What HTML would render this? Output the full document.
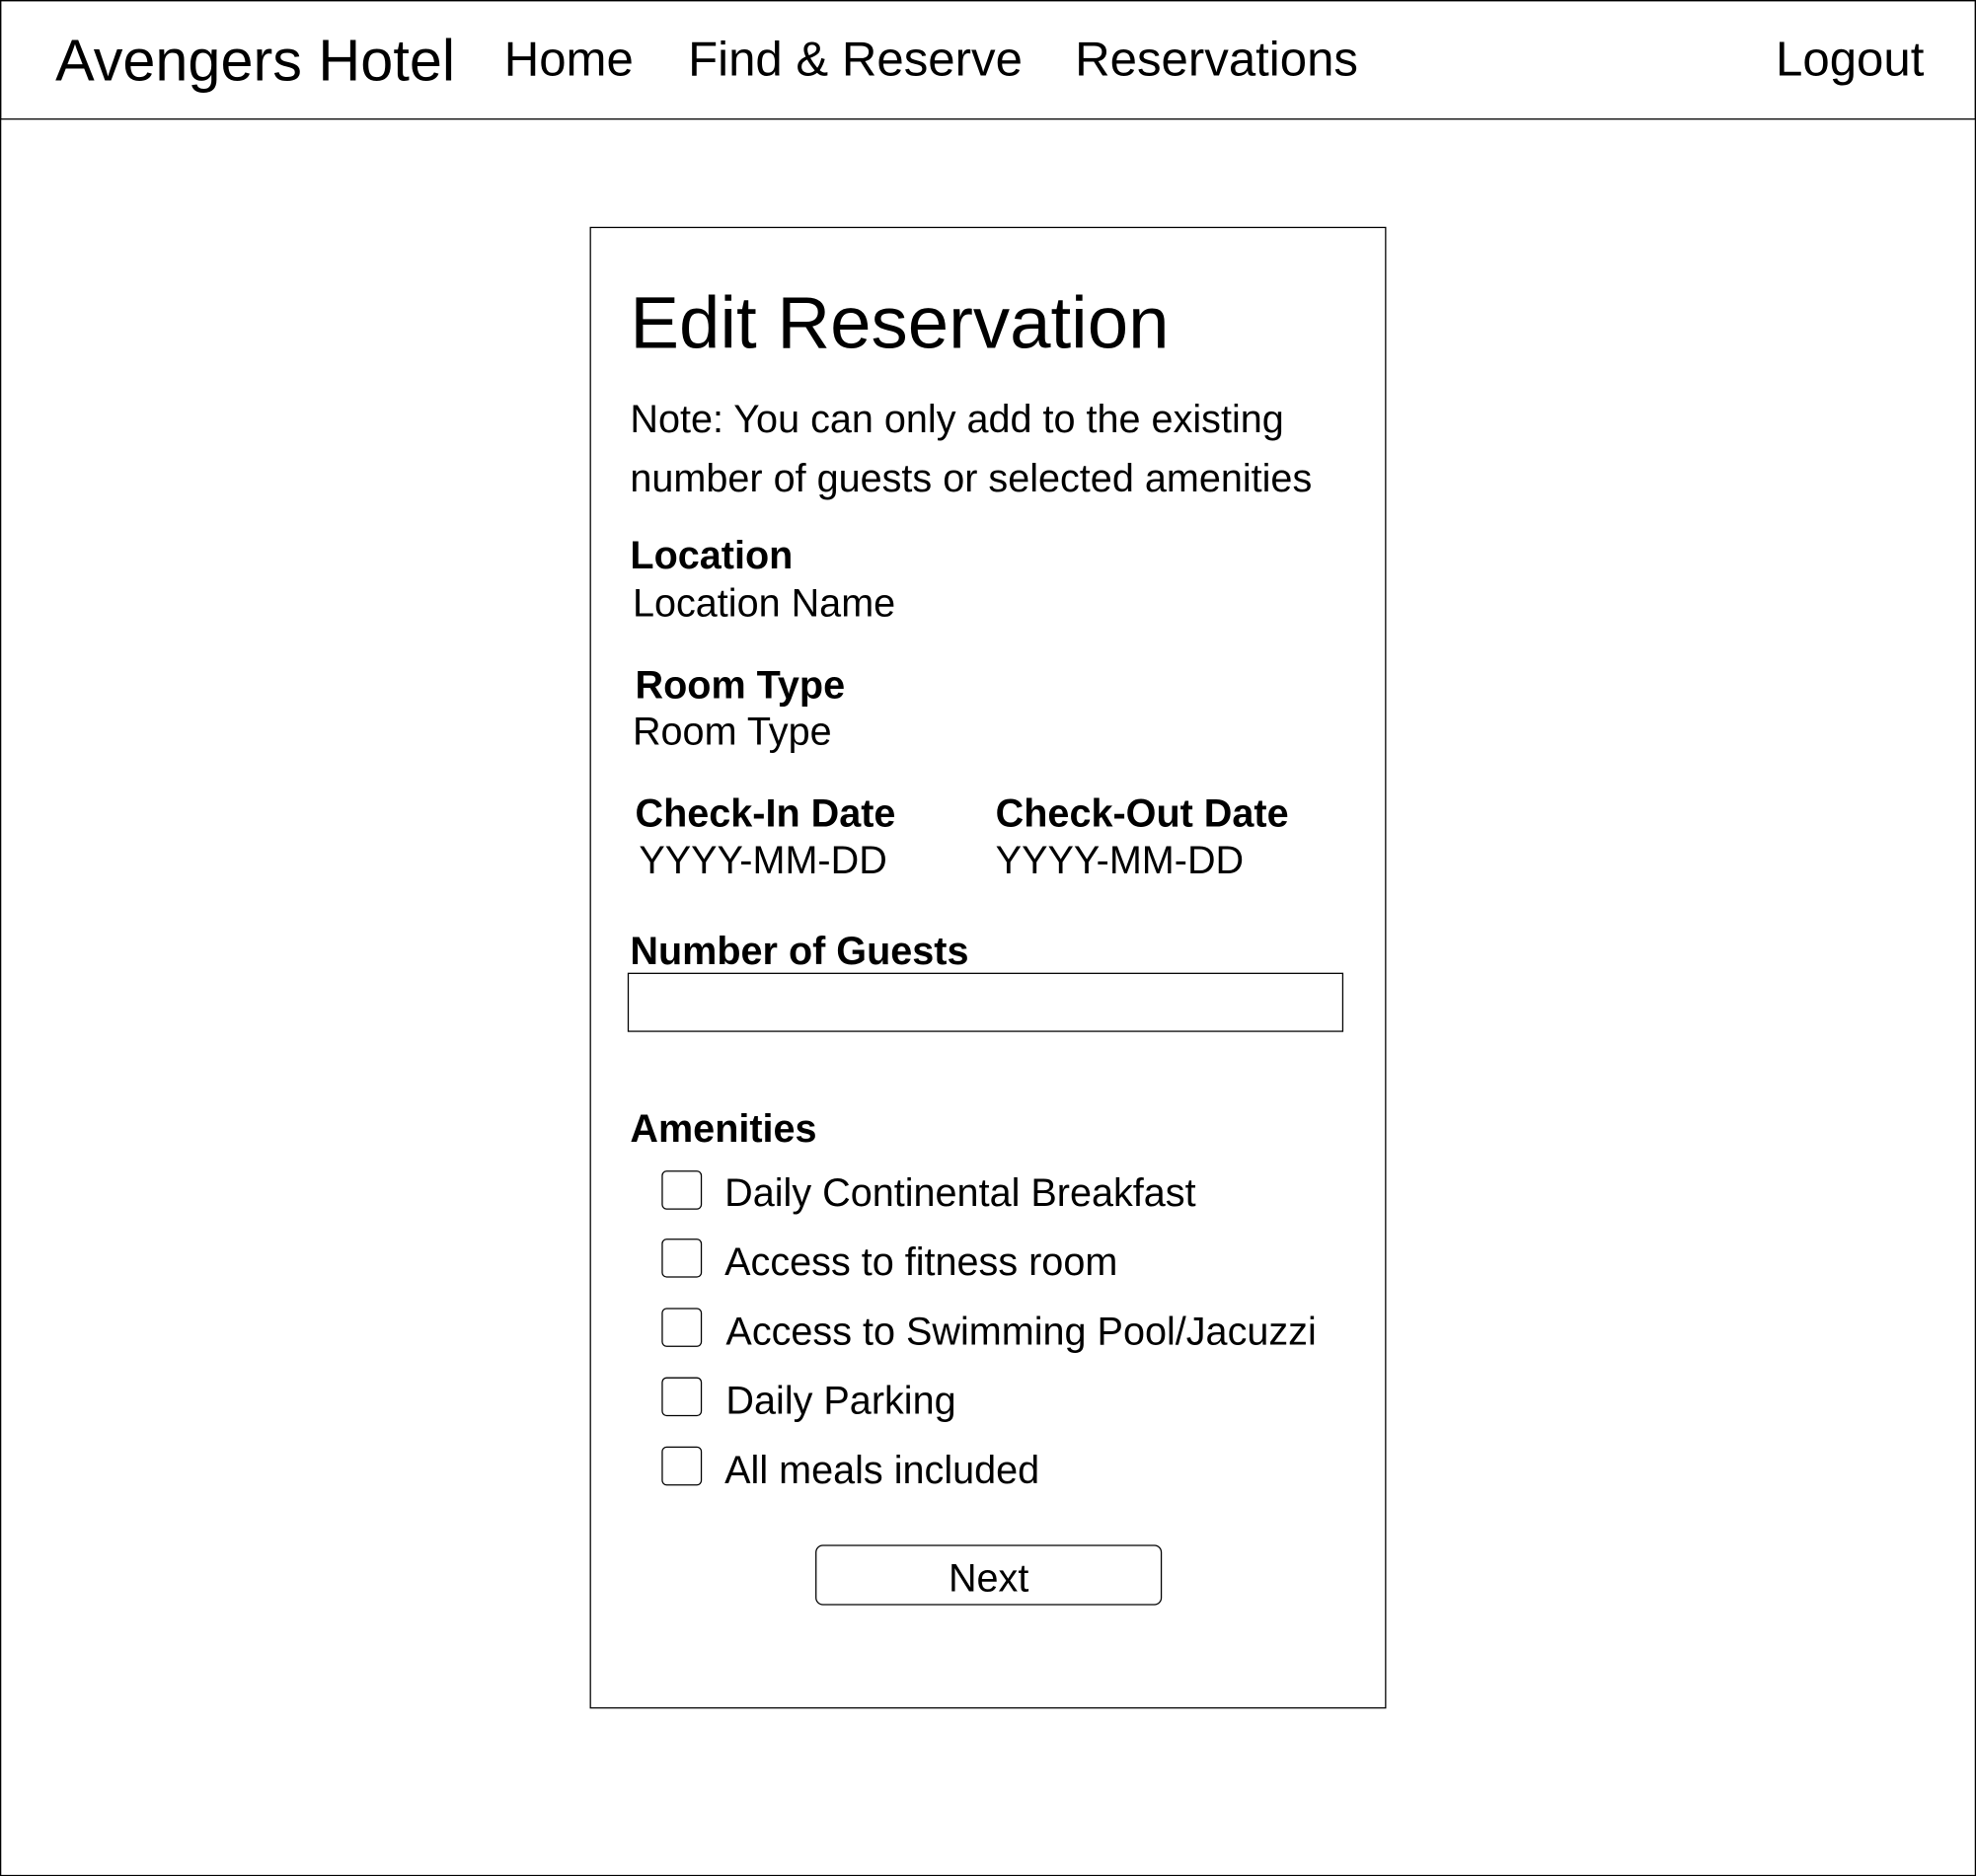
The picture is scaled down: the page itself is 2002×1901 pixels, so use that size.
<!DOCTYPE html>
<html><head><meta charset="utf-8"><style>
html,body{margin:0;padding:0;background:#fff;width:2002px;height:1901px;overflow:hidden}
#w{position:absolute;left:0;top:0;width:1568px;height:1489px;transform:scale(1.2768);transform-origin:0 0;font-family:"Liberation Sans",Arial,sans-serif;color:#000}
.t{position:absolute;line-height:1;white-space:nowrap}
.b{font-weight:bold}
.box{position:absolute;border:1px solid #000;box-sizing:border-box}
.cb{position:absolute;left:525px;width:32px;height:31px;border:1px solid #000;border-radius:4px;box-sizing:border-box}
</style></head><body><div id="w">
<div class="box" style="left:0;top:0;width:1568px;height:1489px"></div>
<div class="box" style="left:0;top:0;width:1568px;height:95px"></div>
<div class="t" style="left:44px;top:25px;font-size:46.5px">Avengers Hotel</div>
<div class="t" style="left:400px;top:29px;font-size:38.5px">Home</div>
<div class="t" style="left:546px;top:29px;font-size:38.5px">Find &amp; Reserve</div>
<div class="t" style="left:853px;top:29px;font-size:38.5px">Reservations</div>
<div class="t" style="left:1409px;top:29px;font-size:38.5px">Logout</div>
<div class="box" style="left:468px;top:180px;width:632px;height:1176px"></div>
<div class="t" style="left:500px;top:228px;font-size:58.3px">Edit Reservation</div>
<div class="t" style="left:500px;top:317px;font-size:31px">Note: You can only add to the existing</div>
<div class="t" style="left:500px;top:364px;font-size:31px">number of guests or selected amenities</div>
<div class="t b" style="left:500px;top:425px;font-size:31px">Location</div>
<div class="t" style="left:502px;top:463px;font-size:31px">Location Name</div>
<div class="t b" style="left:504px;top:528px;font-size:31px">Room Type</div>
<div class="t" style="left:502px;top:565px;font-size:31px">Room Type</div>
<div class="t b" style="left:504px;top:630px;font-size:31px">Check-In Date</div>
<div class="t b" style="left:790px;top:630px;font-size:31px">Check-Out Date</div>
<div class="t" style="left:507px;top:667px;font-size:31px">YYYY-MM-DD</div>
<div class="t" style="left:790px;top:667px;font-size:31px">YYYY-MM-DD</div>
<div class="t b" style="left:500px;top:739px;font-size:31px">Number of Guests</div>
<div class="box" style="left:498px;top:772px;width:568px;height:47px"></div>
<div class="t b" style="left:500px;top:880px;font-size:31px">Amenities</div>
<div class="cb" style="top:929px"></div>
<div class="cb" style="top:983px"></div>
<div class="cb" style="top:1038px"></div>
<div class="cb" style="top:1093px"></div>
<div class="cb" style="top:1148px"></div>
<div class="t" style="left:575px;top:931px;font-size:31px">Daily Continental Breakfast</div>
<div class="t" style="left:575px;top:986px;font-size:31px">Access to fitness room</div>
<div class="t" style="left:576px;top:1041px;font-size:31px">Access to Swimming Pool/Jacuzzi</div>
<div class="t" style="left:576px;top:1096px;font-size:31px">Daily Parking</div>
<div class="t" style="left:575px;top:1151px;font-size:31px">All meals included</div>
<div class="box" style="left:647px;top:1226px;width:275px;height:48px;border-radius:6px"></div>
<div class="t" style="left:647px;width:275px;text-align:center;top:1237px;font-size:31px">Next</div>
</div></body></html>
